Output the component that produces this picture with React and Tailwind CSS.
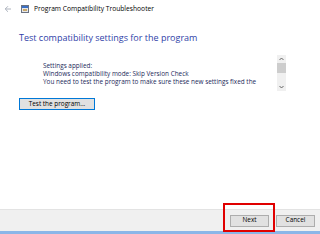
import React from 'react';

const font = { fontFamily: '"Open Sans", "Noto Sans", sans-serif' };

const App = () => {
  return (
    <div className="relative w-[320px] h-[234px] bg-white flex flex-col overflow-hidden" style={font}>
      <div className="h-[18px] flex items-center pl-[4px] gap-[3px]">
        <svg width="8" height="8" viewBox="0 0 8 8" className="text-gray-400">
          <path d="M7 4H1.5M4 1.2L1.2 4L4 6.8" stroke="currentColor" strokeWidth="0.8" fill="none" />
        </svg>
        <div className="ml-[6px] w-[8px] h-[8px] border border-gray-500 bg-gray-200 flex flex-col">
          <div className="h-[2px] bg-[#3a6fc4]" />
          <div className="flex-1 bg-[#c9a86a] m-[1px]" />
        </div>
        <span className="ml-[2px] text-[6.7px] leading-none text-black">Program Compatibility Troubleshooter</span>
      </div>

      <div className="pl-[19px] pt-[15px] text-[9px] leading-none text-[#2f3fa8]">
        Test compatibility settings for the program
      </div>

      <div className="flex pl-[43px] pt-[13px] pr-[34px]">
        <div className="flex-1 pt-[7px] text-[6.4px] leading-[7.8px] text-[#1c2a5a]">
          <div>Settings applied:</div>
          <div>Windows compatibility mode: Skip Version Check</div>
          <div className="whitespace-nowrap">You need to test the program to make sure these new settings fixed the</div>
        </div>
        <div className="w-[9px] h-[36px] bg-[#f0f0f0] flex flex-col items-center">
          <svg width="9" height="8" viewBox="0 0 9 8">
            <path d="M2.5 5L4.5 3L6.5 5" stroke="#555" strokeWidth="0.9" fill="none" />
          </svg>
          <div className="w-[9px] h-[10px] bg-[#cdcdcd]" />
          <div className="flex-1" />
          <svg width="9" height="8" viewBox="0 0 9 8">
            <path d="M2.5 3L4.5 5L6.5 3" stroke="#555" strokeWidth="0.9" fill="none" />
          </svg>
        </div>
      </div>

      <div className="pl-[19px] pt-[7px]">
        <button className="w-[76px] h-[12px] border border-[#0078d7] bg-[#e1e1e1] text-[6.4px] leading-none text-black flex items-center justify-center">
          Test the program...
        </button>
      </div>

      <div className="flex-1" />

      <div className="h-[25px] bg-[#f0f0f0] border-t border-[#e3e3e3] border-b-[3px] border-b-[#8bb6e8] flex items-center justify-end pr-[5px] gap-[7px]">
        <button className="w-[39px] h-[12px] border border-[#adadad] bg-[#e1e1e1] text-[6.4px] leading-none text-black flex items-center justify-center">
          Next
        </button>
        <button className="w-[39px] h-[12px] border border-[#adadad] bg-[#e1e1e1] text-[6.4px] leading-none text-black flex items-center justify-center">
          Cancel
        </button>
      </div>

      <div className="absolute left-[223px] top-[203px] w-[52px] h-[29px] border-2 border-[#e00000]" />
    </div>
  );
};

export default App;
